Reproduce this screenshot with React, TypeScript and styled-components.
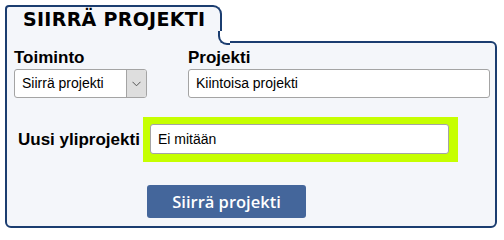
import React from "react";
import styled, { createGlobalStyle } from "styled-components";

const NAVY = "#1b3d70";
const PANEL_BG = "#f4f6fa";

const Global = createGlobalStyle`
  html, body { margin: 0; padding: 0; background: #ffffff; }
  body { font-family: "Liberation Sans", Arial, sans-serif; }
`;

const Wrap = styled.div`
  padding: 5px 7px 0 5px;
  width: 492px;
`;

const Tab = styled.div`
  position: relative;
  z-index: 1;
  display: inline-block;
  box-sizing: border-box;
  width: 217px;
  height: 38px;
  padding: 0 0 0 16px;
  border: 2px solid ${NAVY};
  border-bottom: none;
  border-radius: 4px 9px 0 0;
  background: ${PANEL_BG};
  font-family: "DejaVu Sans", Verdana, sans-serif;
  font-weight: bold;
  font-size: 19px;
  letter-spacing: 0.3px;
  line-height: 24px;
  color: #000;
  white-space: nowrap;

  &::before {
    content: "";
    position: absolute;
    left: calc(100% - 2px);
    bottom: 0;
    width: 12px;
    height: 12px;
    background: ${PANEL_BG};
  }
  &::after {
    content: "";
    position: absolute;
    left: calc(100% - 2px);
    bottom: -2px;
    box-sizing: border-box;
    width: 12px;
    height: 14px;
    background: #ffffff;
    border-left: 2px solid ${NAVY};
    border-bottom: 2px solid ${NAVY};
    border-bottom-left-radius: 9px;
  }
`;

const Panel = styled.div`
  box-sizing: border-box;
  margin-top: -2px;
  height: 187px;
  padding: 5px 5px 8px 7px;
  border: 2px solid ${NAVY};
  border-radius: 0 6px 6px 6px;
  background: ${PANEL_BG};
`;

const TopRow = styled.div`
  display: grid;
  grid-template-columns: 133px 1fr;
  column-gap: 41px;
`;

const Field = styled.div`
  display: flex;
  flex-direction: column;
  gap: 1px;
`;

const Label = styled.label`
  font-family: "Liberation Sans", Arial, sans-serif;
  font-weight: bold;
  font-size: 17px;
  line-height: 20px;
  color: #000;
  white-space: nowrap;
`;

const SelectBox = styled.div`
  box-sizing: border-box;
  display: flex;
  height: 29px;
  border: 1px solid #a4a4a4;
  border-radius: 3px;
  background: #fff;
  overflow: hidden;
`;

const SelectText = styled.div`
  flex: 1;
  padding-left: 7px;
  font-size: 14px;
  line-height: 27px;
  color: #000;
  white-space: nowrap;
`;

const SelectArrow = styled.div`
  width: 19px;
  display: flex;
  align-items: center;
  justify-content: center;
  border-left: 1px solid #a4a4a4;
  background: #dedede;
`;

const TextBox = styled.div`
  box-sizing: border-box;
  height: ${(p: { $h?: number }) => p.$h ?? 29}px;
  padding-left: 7px;
  border: 1px solid #a4a4a4;
  border-radius: 3px;
  background: #fff;
  font-size: 14px;
  line-height: ${(p: { $h?: number }) => (p.$h ?? 29) - 2}px;
  color: #000;
  white-space: nowrap;
`;

const MidRow = styled.div`
  display: flex;
  align-items: center;
  margin-top: 19px;
  padding-left: 4px;
  gap: 3px;
`;

const Highlight = styled.div`
  box-sizing: border-box;
  width: 315px;
  height: 45px;
  padding: 7px 9px 8px 7px;
  background: #c6ff00;
`;

const ButtonRow = styled.div`
  display: flex;
  margin-top: 23px;
  padding-left: 133px;
`;

const Button = styled.button`
  box-sizing: border-box;
  width: 159px;
  height: 33px;
  border: none;
  border-radius: 3px;
  background: #44669b;
  color: #fff;
  font-family: "Open Sans", sans-serif;
  font-weight: 600;
  font-size: 16.5px;
  line-height: 33px;
  padding: 0;
  cursor: pointer;
`;

const Chevron = () => (
  <svg width="9" height="6" viewBox="0 0 9 6" fill="none">
    <polyline points="0.5,0.8 4.5,4.8 8.5,0.8" stroke="#555" strokeWidth="1" />
  </svg>
);

export default function App() {
  return (
    <>
      <Global />
      <Wrap>
        <Tab>SIIRRÄ PROJEKTI</Tab>
        <Panel>
          <TopRow>
            <Field>
              <Label>Toiminto</Label>
              <SelectBox>
                <SelectText>Siirrä projekti</SelectText>
                <SelectArrow>
                  <Chevron />
                </SelectArrow>
              </SelectBox>
            </Field>
            <Field>
              <Label>Projekti</Label>
              <TextBox>Kiintoisa projekti</TextBox>
            </Field>
          </TopRow>
          <MidRow>
            <Label>Uusi yliprojekti</Label>
            <Highlight>
              <TextBox $h={30}>Ei mitään</TextBox>
            </Highlight>
          </MidRow>
          <ButtonRow>
            <Button>Siirrä projekti</Button>
          </ButtonRow>
        </Panel>
      </Wrap>
    </>
  );
}
